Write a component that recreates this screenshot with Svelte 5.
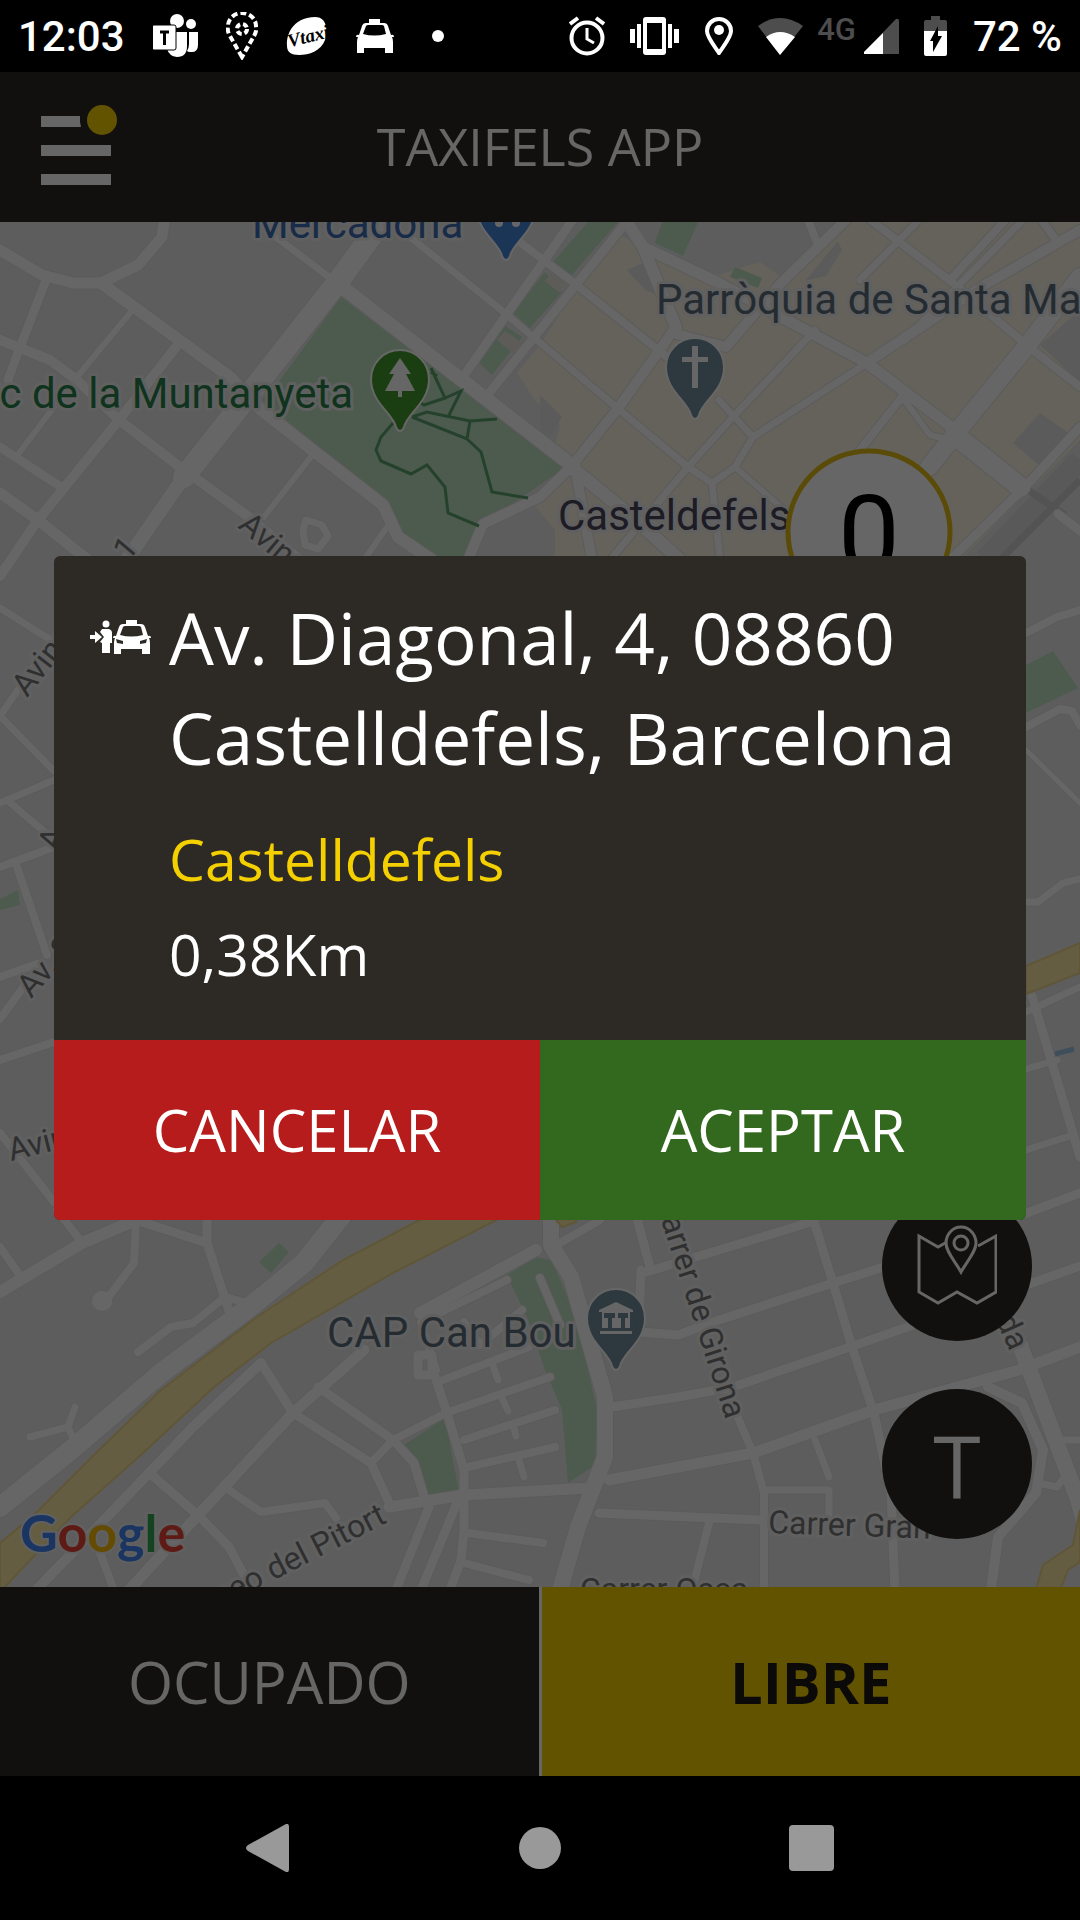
<script>
	let status = 'libre';
	let showRequest = true;

	const request = {
		address: 'Av. Diagonal, 4, 08860 Castelldefels, Barcelona',
		zone: 'Castelldefels',
		distance: '0,38Km'
	};

	const waiting = 0;

	// Each road is [stroke width, path]
	const roads = [
		[11, 'M0 250L42 275L73 283H101L138 265L162 237L165 215'],
		[9, 'M46 280L19 350L8 380'],
		[12, 'M101 283L230 377L260 409L383 505L398 537L432 560'],
		[6, 'M130 313L77 377'],
		[10, 'M176 347L119 420L38 520L0 576'],
		[10, 'M0 340L50 360L77 380L119 420L180 467L249 517L300 560'],
		[9, 'M0 447L61 487'],
		[11, 'M0 493L38 520L88 560'],
		[6, 'M54 407L19 453'],
		[6, 'M314 453L264 517'],
		[6, 'M387 527L364 560'],
		[7, 'M306 520L322 525L328 536L318 549L305 545L303 530Z'],
		[7, 'M276 237L337 283'],
		[14, 'M337 283L574 467'],
		[7, 'M410 237L505 313L616 407L688 467L712 483L720 560'],
		[8, 'M517 240L574 283L667 357'],
		[9, 'M576 215L463 377'],
		[9, 'M632 215L486 397'],
		[22, 'M385 217L337 283L184 477'],
		[14, 'M184 477L125 562'],
		[12, 'M622 215L643 247L676 327'],
		[11, 'M643 247L719 283L781 317L867 363L946 423L1025 487'],
		[8, 'M806 215L818 245'],
		[8, 'M864 215L953 283L1029 347L1080 387'],
		[10, 'M846 220L781 283L726 347L672 333'],
		[10, 'M676 327L619 407L571 467L540 497L483 524L468 560'],
		[7, 'M919 220L860 280'],
		[7, 'M1025 218L905 340'],
		[8, 'M1038 215L1056 240'],
		[10, 'M1080 230L981 287L871 360'],
		[7, 'M867 363L753 437L735 467L712 483'],
		[8, 'M1010 215L950 280'],
		[18, 'M1080 277L1026 347L964 423L929 467'],
		[7, 'M815 330L733 417L688 467L610 560'],
		[7, 'M719 400L753 437'],
		[6, 'M735 467L790 515'],
		[8, 'M902 397L860 450'],
		[6, 'M902 397L930 435L950 440'],
		[13, 'M571 467L636 520L680 560'],
		[10, 'M575 467L592 560'],
		[9, 'M1080 427L1025 487L950 560'],
		[20, 'M955 435L1020 487'],
		[9, 'M1058 514L1080 531'],
		[7, 'M0 608L54 642M0 716L35 665M0 716L54 771M0 803L54 780M7 800L54 840'],
		[8, 'M0 867L54 847M17 867L47 955M0 977L37 964M0 1019L27 982M0 1060L54 1042M0 1133L54 1202'],
		[8, 'M1026 633L1057 617L1080 610M1026 727L1060 709L1072 711L1080 725'],
		[5, 'M1026 750L1080 803'],
		[7, 'M1026 902H1038L1063 883L1080 879M1026 1012L1080 987M1026 1069L1057 1060M1026 1150L1070 1136'],
		[9, 'M1032 996L1080 1157'],
		[8, 'M57 1210L80 1240M0 1247L21 1277'],
		[12, 'M0 1292L82 1243L136 1220'],
		[8, 'M136 1220L134 1263L104 1303'],
		[9, 'M136 1220L207 1243V1215M207 1243L232 1320'],
		[8, 'M225 1297L193 1323L171 1327L138 1352M225 1297L250 1304'],
		[20, 'M342 1215L304 1263L246 1310L161 1373L71 1450L0 1507'],
		[10, 'M261 1363L193 1427L107 1517L36 1590'],
		[7, 'M30 1437L68 1427L75 1407M68 1427L77 1447'],
		[9, 'M261 1363L293 1413L371 1463L391 1507'],
		[11, 'M364 1350L293 1413L200 1513L129 1590'],
		[9, 'M318 1387L393 1440L414 1463L425 1500'],
		[8, 'M371 1463L393 1440L446 1413L550 1377'],
		[9, 'M154 1477L200 1517L229 1547L252 1590'],
		[8, 'M229 1490L261 1512L325 1503L336 1518M100 1553L114 1590'],
		[12, 'M536 1250L420 1313'],
		[8, 'M507 1280L421 1322L436 1370'],
		[9, 'M418 1355H432V1375H418ZM432 1367L450 1423L464 1470V1530L461 1560L450 1590'],
		[8, 'M443 1380L529 1347M464 1322L480 1345L522 1310M464 1440L555 1410M468 1467L555 1447'],
		[7, 'M492 1363L498 1380M502 1398L508 1411M513 1425L516 1436M519 1460L524 1477'],
		[11, 'M389 1507L464 1495L590 1488'],
		[9, 'M429 1507L396 1590M457 1503L421 1590'],
		[8, 'M468 1533L543 1543M464 1563L529 1580'],
		[16, 'M551 1220V1245L571 1277L605 1397V1457L578 1527L560 1590'],
		[8, 'M560 1243L600 1220M540 1278L560 1325'],
		[9, 'M636 1215L650 1267M643 1273L808 1223M641 1270L639 1320'],
		[9, 'M640 1332L678 1335L719 1320L833 1283L884 1267L1080 1193'],
		[9, 'M612 1407L678 1397L733 1387L850 1347L919 1323L1080 1266'],
		[11, 'M609 1480L753 1453L874 1410L1019 1370L1080 1347'],
		[9, 'M812 1215L833 1283L853 1350L874 1413L891 1493L895 1590'],
		[8, 'M736 1413L753 1453L764 1493V1590'],
		[7, 'M815 1440L829 1477M764 1490H829V1520'],
		[9, 'M599 1513L760 1520'],
		[8, 'M709 1523L692 1590'],
		[16, 'M1020 1345L1032 1377L1077 1497L1084 1520'],
		[10, 'M988 1387L1022 1403L1043 1450L1036 1493L998 1537L991 1590'],
		[7, 'M1043 1484L1057 1487L1070 1470M1060 1440H1080']
	];

	const parks = [
		'M341 297L566 467L483 524L470 560H432L402 537L390 507L262 400L280 380Z',
		'M588 222L553 262L571 276L618 222Z',
		'M545 272L513 313L530 328L562 292Z',
		'M501 323L476 360L492 375L522 337Z',
		'M662 222L655 243L683 256L698 222Z',
		'M735 267L730 277L758 288L762 278Z',
		'M0 899L18 890L20 905L0 910Z',
		'M1026 665L1053 651L1078 688L1026 713Z',
		'M404 1445L445 1418L459 1492L429 1495Z',
		'M259 1262L279 1243L289 1252L271 1273Z',
		'M507 1275L535 1257L552 1260L577 1320L597 1410L595 1465L568 1483L562 1410L545 1370L528 1320Z'
	];

	const taxiBody = 'M13 0H24V4H28Q31 4 32 7L35 16Q38 15 38 18H36Q37 20 37 23V34H29V29H8V34H1V23Q1 20 2 18H0Q0 15 3 16L6 7Q7 4 10 4H13ZM10 7L7 15Q18 18 30 15L28 7Q27 6 26 6H12Q11 6 10 7Z';
	const pinShape = 'M0 0C-2 0-3-1-4-4C-7-18-29-28-29-52A29 29 0 1 1 29-52C29-28 7-18 4-4C3-1 2 0 0 0Z';

	function setStatus(value) {
		status = value;
	}

	function closeRequest() {
		showRequest = false;
	}
</script>

<div class="phone">
	<div class="screen">
		<div class="statusbar">
			<div class="group">
				<span class="clock">12:03</span>
				<svg width="45" height="44" viewBox="0 0 45 44">
					<circle cx="24" cy="7" r="7" fill="#fff" />
					<circle cx="38" cy="10" r="5" fill="#fff" />
					<path d="M36 18H45V31Q45 39 37 38Q35 38 34 37Q36 34 36 30Z" fill="#fff" />
					<path d="M13 18H34V32Q34 43 24 43Q16 42 14 35H22V15Z" fill="#fff" />
					<rect x="-1" y="11" width="24" height="25" rx="2" fill="#fff" stroke="#000" />
					<path d="M7 18H16M11.500 18V31" stroke="#000" stroke-width="3" />
				</svg>
				<svg width="32" height="48" viewBox="0 0 32 48" fill="none" stroke="#fff" stroke-width="4" stroke-dasharray="6 3">
					<path d="M16 45L4 24Q1 19 2 14A14 13 0 0 1 30 14Q31 19 28 24Z" />
					<circle cx="16" cy="17" r="5" stroke-dasharray="5 3" />
				</svg>
				<svg class="vtaxi" width="42" height="40" viewBox="0 0 42 40">
					<path d="M1 30C0 15 10 1 29 1C41 1 42 14 39 24C35 35 23 39 13 39C5 39 1 36 1 30Z" fill="#fff" />
					<text x="1" y="27" class="brand" transform="rotate(-14 20 20)">Vtaxi</text>
				</svg>
				<svg width="38" height="34" viewBox="0 0 38 34" fill="#fff" fill-rule="evenodd"><path d={taxiBody} /></svg>
				<span class="more"></span>
			</div>
			<div class="group">
				<svg width="36" height="40" viewBox="0 0 36 40" fill="none" stroke="#fff" stroke-width="4">
					<circle cx="18" cy="22" r="15.500" />
					<path d="M18 12V23L25 27" stroke-width="3" />
					<path d="M1 8L9 2M35 8L27 2" />
				</svg>
				<svg width="50" height="38" viewBox="0 0 50 38" fill="#fff">
					<path d="M13 3Q13 0 16 0H33Q36 0 36 3V35Q36 38 33 38H16Q13 38 13 35ZM17 6V32H32V6Z" fill-rule="evenodd" />
					<path d="M0 12H5V26H0ZM7 7H11V31H7ZM38 7H42V31H38ZM44 12H49V26H44Z" />
				</svg>
				<svg width="28" height="38" viewBox="0 0 28 38">
					<path d="M14 36C8 27 2 20 2 14A12 12 0 0 1 26 14C26 20 20 27 14 36Z" fill="none" stroke="#fff" stroke-width="4" />
					<circle cx="14" cy="13" r="5" fill="#fff" />
				</svg>
				<div class="network">
					<svg width="45" height="37" viewBox="0 0 45 37">
						<path d="M22 37L0 8Q22-8 45 8Z" fill="#4d4d4d" />
						<path d="M22 37L8 19Q22 9 37 19Z" fill="#fff" />
					</svg>
					<span class="mobile">4G</span>
					<svg width="35" height="36" viewBox="0 0 35 36">
						<path d="M0 34L32 1Q35 0 35 3V36H1Q-1 36 0 34Z" fill="#4d4d4d" />
						<path d="M0 34L19 15V36H1Q-1 36 0 34Z" fill="#fff" />
					</svg>
				</div>
				<svg width="24" height="40" viewBox="0 0 24 40">
					<path d="M7 0H16V4H21Q23 4 23 6V16H0V6Q0 4 2 4H7Z" fill="#4d4d4d" />
					<path d="M0 15H23V38Q23 40 21 40H2Q0 40 0 38Z" fill="#fff" />
					<path d="M14 10V20H18L9 36V25H6Z" fill="#000" />
				</svg>
				<span class="battery">72 %</span>
			</div>
		</div>

		<header>
			<button class="menu" aria-label="Menú">
				<svg width="78" height="80" viewBox="0 0 78 80">
					<path d="M0 11H39V17L40 22H0ZM0 40H70V51H0ZM0 69H70V80H0Z" fill="#fff" />
					<circle cx="61" cy="15" r="15" fill="#f5d000" />
				</svg>
			</button>
			<h1>TAXIFELS APP</h1>
		</header>

		<div class="map">
			<svg class="canvas" viewBox="0 222 1080 1365" preserveAspectRatio="xMidYMid slice">
				<rect x="0" y="222" width="1080" height="1365" fill="#e9e9e9" />
				<path
					d="M620 235L575 290L540 345L517 373L535 400L560 425L553 455L575 467L530 500L555 530V560H960L1080 440V222H838L785 280L760 262L719 275L650 250Z"
					fill="#faf5e0"
				/>
				<path d="M1080 310L1040 345L1080 382ZM1040 413L1070 434L1041 467L1013 443ZM838 241L805 281L826 276L842 250ZM627 270L650 260L660 296L645 290ZM540 395L562 417L548 440L540 435Z" fill="#e6e4e4" />
				{#each parks as d}
					<path {d} fill="#c0e2c4" />
				{/each}
				<path d="M553 272L566 280L560 293L545 281ZM505 331L522 343L514 354L497 340Z" fill="#ece6dc" />
				<path d="M1080 460L985 560" stroke="#dededf" stroke-width="22" />
				<path d="M1080 480L1000 560M1028 490L1065 515" stroke="#d0d0d2" stroke-width="7" />
				<g fill="none" stroke="#e2e2e2" stroke-linejoin="round" stroke-linecap="round">
					{#each roads as [width, d]}
						<path {d} stroke-width={width + 2} />
					{/each}
				</g>
				<g fill="none" stroke="#fff" stroke-linejoin="round" stroke-linecap="round">
					{#each roads as [width, d]}
						<path {d} stroke-width={width} />
					{/each}
				</g>
				<circle cx="102" cy="1301" r="10" fill="#fff" />
				<path
					d="M429 1215L343 1260L257 1317L161 1390L96 1453L36 1513L0 1543V1592L71 1517L143 1453L214 1387L271 1343L393 1273L506 1215ZM1026 966L1080 943V973L1026 994ZM552 1215L562 1227L576 1222V1215ZM1080 1510L1073 1545L1043 1565L1036 1590H1060L1068 1570L1080 1562Z"
					fill="#fbe9a3"
					stroke="#eed68a"
					stroke-width="2"
				/>
				<path d="M1055 1054L1074 1049" stroke="#9cc4e4" stroke-width="5" />

				<g fill="none" stroke="#5ba36c" stroke-width="3">
					<path d="M431 368L445 398L424 405L413 398M431 372L437 376M445 398L461 391L449 415M412 417L427 412L470 421L497 419M470 421L467 439L412 417M467 439L481 452L492 492L528 498" />
					<path d="M393 423L381 437L376 450L381 461L411 474L427 465L445 487L448 513L479 526" />
				</g>

				<g transform="translate(506 260)" class="pin">
					<path d={pinShape} fill="#4285d8" />
					<circle cx="-7" cy="-37" r="4" fill="#fff" />
					<circle cx="10" cy="-37" r="4" fill="#fff" />
				</g>
				<g transform="translate(400 431)" class="pin">
					<path d={pinShape} fill="#439c2e" />
					<path d="M0-73L11-57H6L15-40H2V-34H-2V-40H-15L-6-57H-11Z" fill="#fff" />
				</g>
				<g transform="translate(695 419)" class="pin">
					<path d={pinShape} fill="#708f9c" />
					<path d="M-3-73H3V-62H13V-57H3V-31H-3V-57H-13V-62H-3Z" fill="#fff" />
				</g>
				<g transform="translate(616 1370)" class="pin">
					<path d={pinShape} fill="#708f9c" />
					<path d="M0-68L17-60V-58H14V-42H9V-52H12V-57H2V-52H5V-42H-4V-52H-1V-57H-12V-52H-8V-42H-14V-58H-17V-60ZM-16-39H16V-36H-16Z" fill="#fff" />
				</g>

				<g class="place">
					<text x="252" y="238" fill="#3c6cb4">Mercadona</text>
					<text x="353" y="408" fill="#28804a" text-anchor="end">Parc de la Muntanyeta</text>
					<text x="656" y="314" fill="#5c6f7c">Parròquia de Santa Ma</text>
					<text x="558" y="530" fill="#4a4458">Casteldefels</text>
					<text x="327" y="1347" fill="#5c6f7c">CAP Can Bou</text>
				</g>
				<g class="street">
					<text transform="translate(237 527) rotate(40)">Avinguda</text>
					<text transform="translate(128 562) rotate(-50)">1</text>
					<text transform="translate(27 698) rotate(-52)">Avinguda</text>
					<text transform="translate(58 852) rotate(-70)">A</text>
					<text transform="translate(31 999) rotate(-48)">Av. 3</text>
					<text transform="translate(11 1161) rotate(-14)">Avinguda</text>
					<text transform="translate(388 1522) rotate(-27)" text-anchor="end">Paseo del Pitort</text>
					<text transform="translate(726 1420) rotate(72)" text-anchor="end">Carrer de Girona</text>
					<text transform="translate(1010 1352) rotate(66)" text-anchor="end">da</text>
					<text transform="translate(768 1533) rotate(2)">Carrer Gran</text>
					<text x="580" y="1600">Carrer Osca</text>
				</g>

				<circle cx="869" cy="532" r="81" fill="#fff" stroke="#e3bb18" stroke-width="5" />
				<text x="869" y="573" class="count">{waiting}</text>

				<text x="20" y="1552" class="google"><tspan fill="#4285f4">G</tspan><tspan fill="#ea4335">o</tspan><tspan fill="#fbbc05">o</tspan><tspan fill="#4285f4">g</tspan><tspan fill="#34a853">l</tspan><tspan fill="#ea4335">e</tspan></text>
			</svg>

			<div class="floating">
				<button aria-label="Mapa">
					<svg width="80" height="82" viewBox="0 0 80 82" fill="none" stroke="#fff" stroke-width="3">
						<path d="M30 17L21 22L2 11V67L21 78L40 67L60 78L79 67V11L61 21" />
						<path d="M44 47C38 36 29 27 29 18A15 16 0 0 1 59 18C59 27 50 36 44 47Z" />
						<circle cx="44" cy="18" r="7" />
					</svg>
				</button>
				<button>T</button>
			</div>
		</div>

		<div class="states">
			<button class="busy" on:click={() => setStatus('ocupado')} aria-pressed={status === 'ocupado'}>OCUPADO</button>
			<button class="free" on:click={() => setStatus('libre')} aria-pressed={status === 'libre'}>LIBRE</button>
		</div>

		{#if showRequest}
			<div class="overlay">
				<div class="dialog" role="dialog" aria-label="Servicio">
					<div class="content">
						<svg class="pickup" width="61" height="34" viewBox="0 0 61 34" fill="#fff">
							<circle cx="16" cy="4" r="3.500" />
							<path d="M12 9H19Q22 10 22 13V23H20V33H12V23L10 22L14 17L10 12Z" />
							<path d="M0 15H5V11L12 17L5 23V19H0Z" />
							<path transform="translate(23 0)" d={taxiBody} fill-rule="evenodd" />
							<path d="M26 19L33 21V24L27 23ZM57 19L50 21V24L56 23Z" fill="#2d2a26" />
						</svg>
						<div class="details">
							<p class="address">{request.address}</p>
							<p class="zone">{request.zone}</p>
							<p class="distance">{request.distance}</p>
						</div>
					</div>
					<div class="answers">
						<button class="cancel" on:click={closeRequest}>CANCELAR</button>
						<button class="accept" on:click={closeRequest}>ACEPTAR</button>
					</div>
				</div>
			</div>
		{/if}
	</div>

	<nav>
		<button aria-label="Atrás">
			<svg width="48" height="48" viewBox="0 0 48 48"><path d="M42 0Q45-1 45 3V45Q45 49 42 48L4 27Q0 24 4 21Z" fill="#999" /></svg>
		</button>
		<button aria-label="Inicio">
			<svg width="48" height="48" viewBox="0 0 48 48"><circle cx="24" cy="24" r="21" fill="#999" /></svg>
		</button>
		<button aria-label="Recientes">
			<svg width="48" height="48" viewBox="0 0 48 48"><rect x="1" y="1" width="45" height="46" rx="4" fill="#999" /></svg>
		</button>
	</nav>
</div>

<style>
	:global(body) {
		background: #000;
	}

	.phone {
		min-height: 100vh;
		display: flex;
		flex-direction: column;
		background: #000;
		color: #fff;
		font-family: 'Open Sans', 'Noto Sans', sans-serif;
	}

	button {
		border: none;
		margin: 0;
		padding: 0;
		background: none;
		color: inherit;
		font: inherit;
		cursor: pointer;
	}

	svg {
		display: block;
		flex: none;
	}

	h1,
	p {
		margin: 0;
		font-weight: 400;
	}

	.screen {
		position: relative;
		flex: 1;
		display: flex;
		flex-direction: column;
	}

	.statusbar {
		position: relative;
		z-index: 2;
		height: 72px;
		padding: 0 18px;
		display: flex;
		align-items: center;
		justify-content: space-between;
		font-family: Roboto, sans-serif;
		font-size: 42px;
		font-weight: 500;
	}

	.group {
		display: flex;
		align-items: center;
		gap: 25px;
	}

	.group:first-child {
		gap: 28px;
	}

	.vtaxi {
		overflow: visible;
	}

	.brand {
		font-family: 'Liberation Serif', serif;
		font-size: 19px;
		font-style: italic;
		font-weight: 700;
		fill: #000;
	}

	.more {
		width: 12px;
		height: 12px;
		margin-left: 10px;
		border-radius: 50%;
		background: #fff;
	}

	.network {
		display: flex;
		align-items: center;
		gap: 8px;
	}

	.mobile {
		align-self: flex-start;
		margin-left: 6px;
		color: #4d4d4d;
		font-size: 31px;
		line-height: 24px;
	}

	header {
		height: 150px;
		padding: 0 41px;
		display: grid;
		grid-template-columns: 78px 1fr 78px;
		align-items: center;
		background: #2d2a26;
	}

	h1 {
		font-size: 52px;
		line-height: 70px;
		padding-bottom: 2px;
		text-align: center;
	}

	.menu {
		padding-bottom: 4px;
	}

	.map {
		position: relative;
		flex: 1;
		min-height: 600px;
		overflow: hidden;
	}

	.canvas {
		position: absolute;
		inset: 0;
		width: 100%;
		height: 100%;
	}

	.pin path:first-child {
		stroke: #fff;
		stroke-width: 2;
	}

	.place,
	.street {
		font-family: Roboto, sans-serif;
		font-size: 42px;
		paint-order: stroke;
		stroke: #f0f0f0;
		stroke-width: 6px;
		stroke-linejoin: round;
	}

	.street {
		font-size: 32px;
		fill: #777;
	}

	.count {
		font-family: Roboto, sans-serif;
		font-size: 110px;
		text-anchor: middle;
	}

	.google {
		font-family: Lato, sans-serif;
		font-size: 52px;
		font-weight: 700;
		paint-order: stroke;
		stroke: #f0f0f0;
		stroke-width: 4px;
	}

	.floating {
		position: absolute;
		right: 48px;
		bottom: 48px;
		display: flex;
		flex-direction: column;
		gap: 48px;
	}

	.floating button {
		width: 150px;
		height: 150px;
		display: flex;
		align-items: center;
		justify-content: center;
		border-radius: 50%;
		background: #2d2a26;
		font-size: 86px;
	}

	.states {
		height: 189px;
		display: grid;
		grid-template-columns: 1fr 1fr;
		gap: 3px;
		background: #fff;
		font-size: 58px;
	}

	.busy {
		background: #2d2a26;
	}

	.free {
		background: #f5d000;
		color: #1c1a17;
		font-weight: 700;
	}

	.overlay {
		position: absolute;
		inset: 0;
		padding: 0 54px;
		display: flex;
		align-items: center;
		background: rgba(0, 0, 0, 0.6);
	}

	.dialog {
		flex: 1;
		border-radius: 6px;
		overflow: hidden;
		background: #2d2a26;
	}

	.content {
		display: flex;
		gap: 18px;
		padding: 32px 36px 46px;
	}

	.pickup {
		margin-top: 32px;
	}

	.address {
		font-size: 71px;
		line-height: 100px;
	}

	.zone,
	.distance {
		font-size: 57px;
		line-height: 80px;
	}

	.zone {
		margin-top: 31px;
		color: #f5d000;
	}

	.distance {
		margin-top: 15px;
	}

	.answers {
		display: grid;
		grid-template-columns: 1fr 1fr;
		font-size: 58px;
	}

	.answers button {
		height: 180px;
		padding-bottom: 2px;
	}

	.cancel {
		background: #b71c1c;
	}

	.accept {
		background: #33691e;
	}

	nav {
		height: 144px;
		padding: 0 244px;
		display: flex;
		align-items: center;
		justify-content: space-between;
	}
</style>
